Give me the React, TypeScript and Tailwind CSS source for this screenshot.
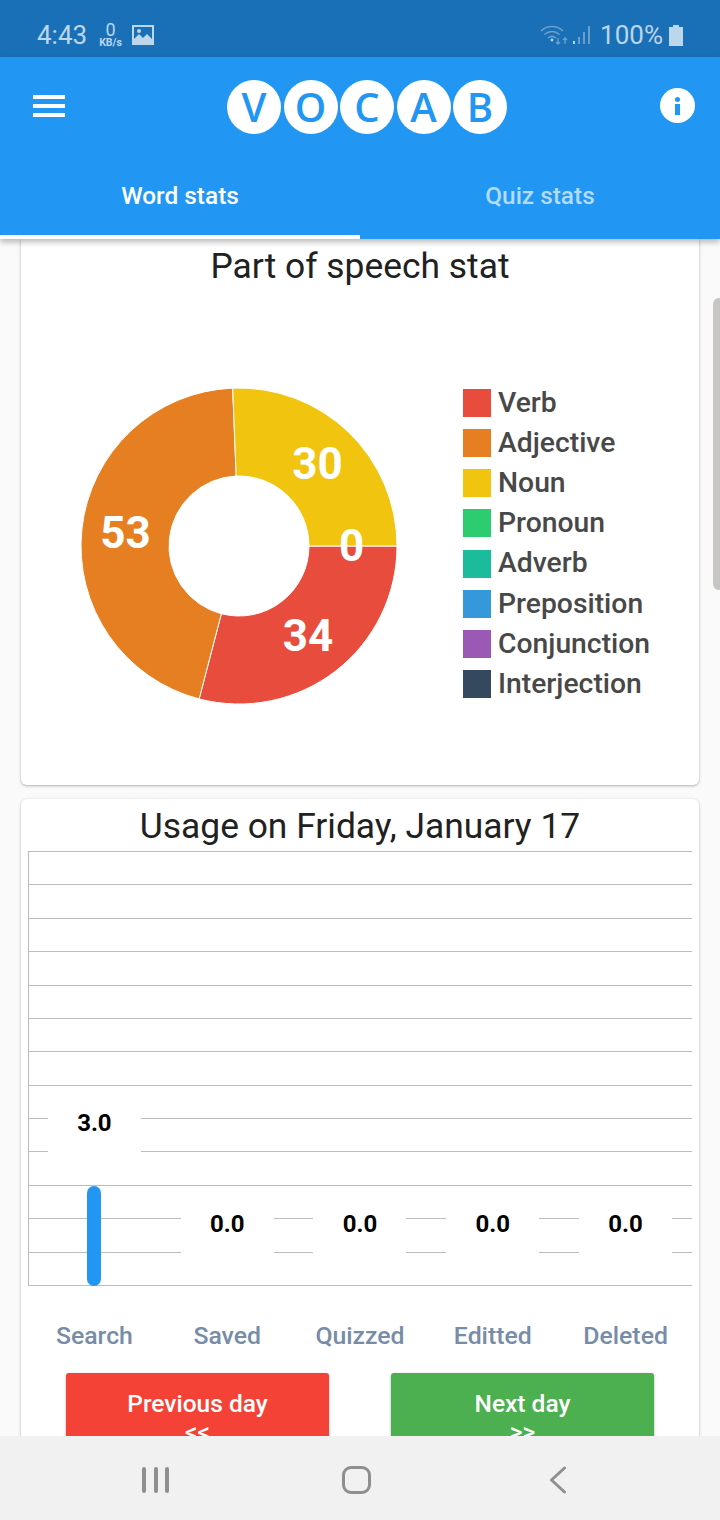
import React from 'react';

const legend = [
  { label: 'Verb', color: 'bg-[#e74c3c]' },
  { label: 'Adjective', color: 'bg-[#e67e22]' },
  { label: 'Noun', color: 'bg-[#f1c40f]' },
  { label: 'Pronoun', color: 'bg-[#2ecc71]' },
  { label: 'Adverb', color: 'bg-[#1abc9c]' },
  { label: 'Preposition', color: 'bg-[#3498db]' },
  { label: 'Conjunction', color: 'bg-[#9b59b6]' },
  { label: 'Interjection', color: 'bg-[#34495e]' },
];

const usage = [
  { label: 'Search', value: '3.0' },
  { label: 'Saved', value: '0.0' },
  { label: 'Quizzed', value: '0.0' },
  { label: 'Editted', value: '0.0' },
  { label: 'Deleted', value: '0.0' },
];

function slice(start: number, end: number) {
  const R = 158;
  const r = 70;
  const c = 160;
  const p = (rad: number, deg: number) => {
    const a = (deg * Math.PI) / 180;
    return `${(c + rad * Math.cos(a)).toFixed(2)} ${(c + rad * Math.sin(a)).toFixed(2)}`;
  };
  const large = end - start > 180 ? 1 : 0;
  return `M${p(R, start)} A${R} ${R} 0 ${large} 1 ${p(R, end)} L${p(r, end)} A${r} ${r} 0 ${large} 0 ${p(r, start)} Z`;
}

function Donut() {
  return (
    <div className="relative w-[320px] h-[320px] shrink-0">
      <svg width="320" height="320" viewBox="0 0 320 320">
        <path d={slice(0, 104.6)} fill="#e74c3c" stroke="#fff" strokeWidth="1" />
        <path d={slice(104.6, 267.7)} fill="#e67e22" stroke="#fff" strokeWidth="1" />
        <path d={slice(267.7, 360)} fill="#f1c40f" stroke="#fff" strokeWidth="1" />
      </svg>
      <span className="absolute left-[239px] top-[78px] -translate-x-1/2 -translate-y-1/2 text-[44px] leading-none font-bold text-white">30</span>
      <span className="absolute left-[273px] top-[160px] -translate-x-1/2 -translate-y-1/2 text-[44px] leading-none font-bold text-white">0</span>
      <span className="absolute left-[47px] top-[147px] -translate-x-1/2 -translate-y-1/2 text-[44px] leading-none font-bold text-white">53</span>
      <span className="absolute left-[229.5px] top-[250px] -translate-x-1/2 -translate-y-1/2 text-[44px] leading-none font-bold text-white">34</span>
    </div>
  );
}

function StatusBar() {
  return (
    <div className="h-[57px] shrink-0 bg-[#1a70b7] flex items-center pt-[13px] pl-[37px] pr-[37px] text-[#bcd6ec]">
      <span className="text-[26px] leading-none">4:43</span>
      <div className="flex flex-col items-center ml-[12px] mt-[-1px]">
        <span className="text-[18px] leading-[15px] mb-[1px]">0</span>
        <span className="text-[10.5px] leading-[10px] font-bold">KB/s</span>
      </div>
      <svg className="ml-[10px]" width="22" height="20" viewBox="0 0 22 20">
        <path fillRule="evenodd" fill="#bcd6ec" d="M0 0H22V20H0Z M2 2V14L7 9L11 13L15 9L20 14V2Z" />
        <circle cx="7" cy="6" r="2" fill="#bcd6ec" />
      </svg>
      <div className="flex-1" />
      <svg width="28" height="22" viewBox="0 0 28 22" fill="none" stroke="#6d9fcb" strokeWidth="1.6">
        <path d="M1 7C7 1 17 1 23 7" />
        <path d="M4.5 10.5C9 6.5 15 6.5 19.5 10.5" />
        <path d="M8 14C10.5 12 13.5 12 16 14" />
        <circle cx="12" cy="16" r="1.4" fill="#bcd6ec" stroke="none" />
        <path d="M18 14V20M16 18L18 20L20 18M25 20V14M23 16L25 14L27 16" strokeWidth="1.3" />
      </svg>
      <svg className="ml-[5px]" width="18" height="22" viewBox="0 0 18 22" fill="#6d9fcb">
        <rect x="0" y="17" width="2" height="3" fill="#bcd6ec" />
        <rect x="5" y="13" width="2" height="7" />
        <rect x="10" y="8" width="2" height="12" />
        <rect x="15" y="2" width="2" height="18" />
      </svg>
      <span className="text-[26px] leading-none ml-[9px]">100%</span>
      <svg className="ml-[6px]" width="14" height="21" viewBox="0 0 14 21" fill="#bcd6ec">
        <path d="M4 0H10V2H14V21H0V2H4Z" />
      </svg>
    </div>
  );
}

function AppBar() {
  return (
    <div className="relative z-10 shrink-0 bg-[#2196f3] h-[182px] shadow-[0_3px_6px_rgba(0,0,0,0.28)] flex flex-col">
      <div className="h-[100px] flex items-center justify-between pl-[33px] pr-[25px]">
        <div className="w-[32px] flex flex-col gap-[5px] mt-[-2px]">
          <div className="h-[4px] bg-white" />
          <div className="h-[4px] bg-white" />
          <div className="h-[4px] bg-white" />
        </div>
        <div className="flex gap-[2.5px] ml-[9px]">
          {['V', 'O', 'C', 'A', 'B'].map((l) => (
            <div key={l} className="w-[54px] h-[54px] rounded-full bg-white flex items-center justify-center text-[#2196f3] text-[40px] leading-none font-semibold font-['Open_Sans',sans-serif]">
              {l}
            </div>
          ))}
        </div>
        <div className="w-[35px] h-[35px] rounded-full bg-white flex flex-col items-center justify-center gap-[2px] mt-[-3px]">
          <div className="w-[5px] h-[5px] rounded-full bg-[#2196f3]" />
          <div className="w-[5px] h-[11px] bg-[#2196f3]" />
        </div>
      </div>
      <div className="flex flex-1">
        <div className="flex-1 flex items-start justify-center pt-[24px] border-b-4 border-white text-white text-[24.4px] leading-[30px] font-medium">Word stats</div>
        <div className="flex-1 flex items-start justify-center pt-[24px] text-[#b3dcfb] text-[24.4px] leading-[30px] font-medium">Quiz stats</div>
      </div>
    </div>
  );
}

function PartOfSpeech() {
  return (
    <div className="mx-[21px] h-[546px] bg-white rounded-b-[6px] shadow-[0_1px_3px_rgba(0,0,0,0.3)] flex flex-col">
      <div className="text-center text-[35.4px] leading-[40px] text-[#212121] pt-[7px]">Part of speech stat</div>
      <div className="flex items-center mt-[100px] pl-[57.5px]">
        <Donut />
        <div className="flex flex-col ml-[64.5px] mt-[-5px]">
          {legend.map((item) => (
            <div key={item.label} className="flex items-center h-[40.2px]">
              <div className={`w-[28px] h-[28px] ${item.color}`} />
              <span className="ml-[7px] text-[28.3px] leading-none font-medium text-[#484848]">{item.label}</span>
            </div>
          ))}
        </div>
      </div>
    </div>
  );
}

function UsageCard() {
  return (
    <div className="mx-[21px] mt-[14px] h-[700px] bg-white rounded-[6px] shadow-[0_1px_3px_rgba(0,0,0,0.3)] px-[7px]">
      <div className="text-center text-[35.4px] leading-[40px] text-[#212121] pt-[7px]">Usage on Friday, January 17</div>
      <div className="relative mt-[5px] h-[435px] border-l border-[#bdbdbd]">
        <div className="h-full flex flex-col justify-between">
          {Array.from({ length: 14 }).map((_, i) => (
            <div key={i} className="h-px bg-[#bdbdbd]" />
          ))}
        </div>
        <div className="absolute inset-y-0 left-[-1px] right-0 grid grid-cols-5">
          {usage.map((u, i) => (
            <div key={u.label} className="relative flex flex-col items-center justify-end">
              {i === 0 ? (
                <>
                  <div className="absolute top-[255px] w-[93px] h-[60px] pb-[26px] bg-white flex items-center justify-center text-[24px] font-bold text-black">{u.value}</div>
                  <div className="w-[14px] h-[100px] rounded-[7px] bg-[#2196f3]" />
                </>
              ) : (
                <div className="absolute top-[354px] w-[93px] h-[60px] pb-[22px] bg-white flex items-center justify-center text-[24px] font-bold text-black">{u.value}</div>
              )}
            </div>
          ))}
        </div>
      </div>
      <div className="grid grid-cols-5 mt-[35px]">
        {usage.map((u) => (
          <div key={u.label} className="text-center text-[24.8px] leading-[30px] font-medium text-[#778ca6]">{u.label}</div>
        ))}
      </div>
      <div className="flex justify-between px-[38px] mt-[22px]">
        <button className="w-[263px] h-[100px] rounded-[3px] bg-[#f44336] text-white text-[24.5px] leading-[28px] font-medium pt-[17px] flex flex-col items-center justify-start shadow-[0_1px_3px_rgba(0,0,0,0.3)]">
          <span>Previous day</span>
          <span>&lt;&lt;</span>
        </button>
        <button className="w-[263px] h-[100px] rounded-[3px] bg-[#4caf50] text-white text-[24.5px] leading-[28px] font-medium pt-[17px] flex flex-col items-center justify-start shadow-[0_1px_3px_rgba(0,0,0,0.3)]">
          <span>Next day</span>
          <span>&gt;&gt;</span>
        </button>
      </div>
    </div>
  );
}

function NavBar() {
  return (
    <div className="relative z-10 h-[84px] shrink-0 bg-[#f1f1f1] pl-[55px] flex items-center">
      <div className="w-[603px] grid grid-cols-3 items-center mt-[4px]">
        <div className="flex justify-center gap-[7.5px]">
          <div className="w-[4px] h-[26px] rounded-full bg-[#8f8f8f]" />
          <div className="w-[4px] h-[26px] rounded-full bg-[#8f8f8f]" />
          <div className="w-[4px] h-[26px] rounded-full bg-[#8f8f8f]" />
        </div>
        <div className="flex justify-center">
          <div className="w-[29px] h-[28px] rounded-[9px] border-[3.5px] border-[#8f8f8f]" />
        </div>
        <div className="flex justify-center">
          <svg width="18" height="28" viewBox="0 0 18 28" fill="none" stroke="#8f8f8f" strokeWidth="3" strokeLinecap="round" strokeLinejoin="round">
            <path d="M15.5 2L2.5 14L15.5 26" />
          </svg>
        </div>
      </div>
    </div>
  );
}

export default function App() {
  return (
    <div className="w-[720px] h-[1520px] flex flex-col overflow-hidden bg-[#fafafa] font-['Roboto',sans-serif]">
      <StatusBar />
      <AppBar />
      <div className="relative flex-1 overflow-hidden">
        <PartOfSpeech />
        <UsageCard />
        <div className="absolute right-0 top-[59px] w-[7px] h-[292px] rounded-l-[6px] bg-[#c8c6c4]" />
      </div>
      <NavBar />
    </div>
  );
}
